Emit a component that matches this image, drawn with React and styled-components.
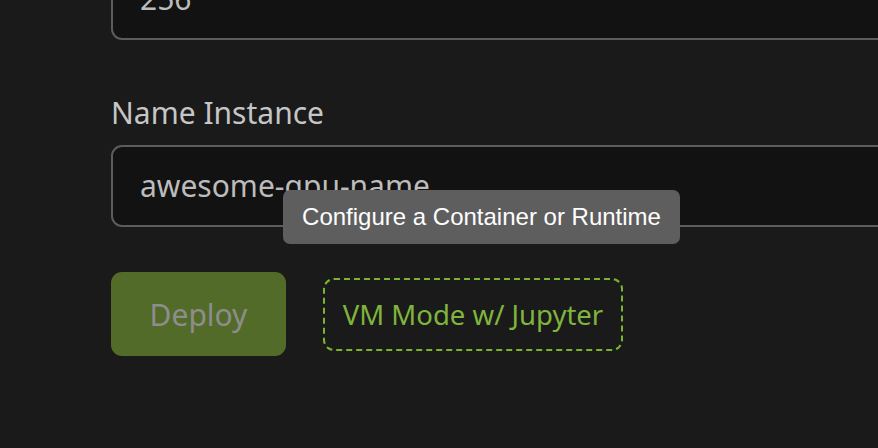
import React from "react";
import styled, { createGlobalStyle } from "styled-components";

const Global = createGlobalStyle`
  html, body { margin: 0; padding: 0; background: #1a1a1a; overflow: hidden; }
  body { width: 878px; height: 448px; font-family: "Noto Sans", "DejaVu Sans", sans-serif; }
`;

const Page = styled.div`
  position: relative;
  width: 878px;
  height: 448px;
  overflow: hidden;
  background: #1a1a1a;
`;

const Form = styled.div`
  display: flex;
  flex-direction: column;
  margin-top: -42px;
  padding-left: 111px;
  width: 1000px;
`;

const Field = styled.div`
  display: flex;
  flex-direction: column;
  gap: 12px;
  margin-top: ${(p) => p.$gap || 0}px;
`;

const Label = styled.label`
  font-size: 30px;
  line-height: 40px;
  color: #c6c6c6;
`;

const Input = styled.div`
  box-sizing: border-box;
  height: 82px;
  width: 100%;
  display: flex;
  align-items: center;
  padding-left: 27px;
  background: #121212;
  border: 2px solid #5c5c5c;
  border-radius: 11px;
  font-size: 30px;
  line-height: 40px;
  color: #bcbcbc;
`;

const Actions = styled.div`
  display: flex;
  align-items: center;
  gap: 37px;
  margin-top: 45px;
`;

const DeployButton = styled.button`
  box-sizing: border-box;
  height: 84px;
  width: 175px;
  border: none;
  border-radius: 11px;
  background: #536b28;
  color: #8d8d8d;
  font-family: "Noto Sans", sans-serif;
  font-size: 30px;
  padding: 0;
`;

const ModeButton = styled.button`
  box-sizing: border-box;
  height: 73px;
  width: 300px;
  border: 2px dashed #7ab52f;
  border-radius: 11px;
  background: transparent;
  color: #7fb53c;
  font-family: "Noto Sans", sans-serif;
  font-size: 27.5px;
  padding: 0;
`;

const Tooltip = styled.div`
  position: absolute;
  left: 283px;
  top: 190px;
  box-sizing: border-box;
  width: 397px;
  height: 54px;
  display: flex;
  align-items: center;
  justify-content: center;
  background: #5e5e5e;
  border-radius: 7px;
  color: #ffffff;
  font-family: "Liberation Sans", Arial, sans-serif;
  font-size: 24px;
`;

export default function App() {
  return (
    <Page>
      <Global />
      <Form>
        <Field>
          <Input>256</Input>
        </Field>
        <Field $gap={53}>
          <Label>Name Instance</Label>
          <Input>awesome-gpu-name</Input>
        </Field>
        <Actions>
          <DeployButton>Deploy</DeployButton>
          <ModeButton>VM Mode w/ Jupyter</ModeButton>
        </Actions>
      </Form>
      <Tooltip>Configure a Container or Runtime</Tooltip>
    </Page>
  );
}
